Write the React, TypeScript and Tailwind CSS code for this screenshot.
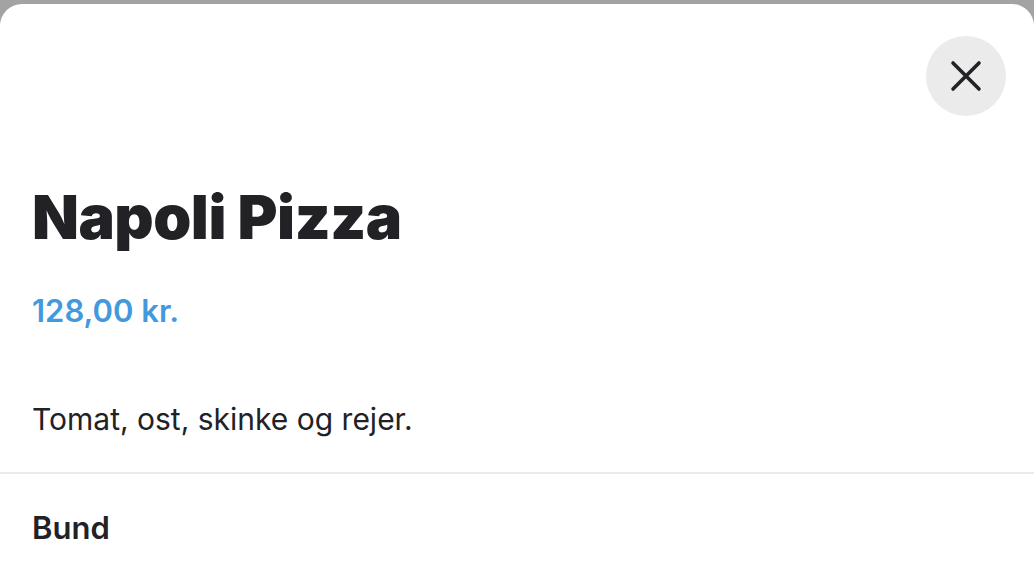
export default function App() {
  return (
    <div className="w-[1034px] h-[580px] bg-[#a3a3a3] pt-[4px] overflow-hidden">
      <div className="h-full bg-white rounded-t-[22px] flex flex-col" style={{ fontFamily: "Inter, 'Noto Sans', sans-serif" }}>
        <div className="flex justify-end pt-[32px] pr-[28px]">
          <button className="w-[80px] h-[80px] rounded-full bg-[#ebebeb] flex items-center justify-center">
            <svg width="32" height="32" viewBox="0 0 32 32" fill="none" stroke="#222226" strokeWidth="3.6" strokeLinecap="round">
              <path d="M3 3L29 29M29 3L3 29" />
            </svg>
          </button>
        </div>
        <div className="px-[32px]">
          <h1 className="mt-[69px] text-[61px] leading-[64px] font-black text-[#222226] tracking-[-0.5px]">Napoli Pizza</h1>
          <div className="mt-[44px] text-[31px] leading-[36px] font-semibold text-[#4299dd]">128,00 kr.</div>
          <p className="mt-[72px] text-[30px] leading-[36px] text-[#222226]">Tomat, ost, skinke og rejer.</p>
        </div>
        <div className="mt-[35px] h-[2px] bg-[#ebebeb]" />
        <div className="px-[32px] mt-[35px] text-[31px] leading-[38px] font-semibold text-[#222226]">Bund</div>
      </div>
    </div>
  );
}
